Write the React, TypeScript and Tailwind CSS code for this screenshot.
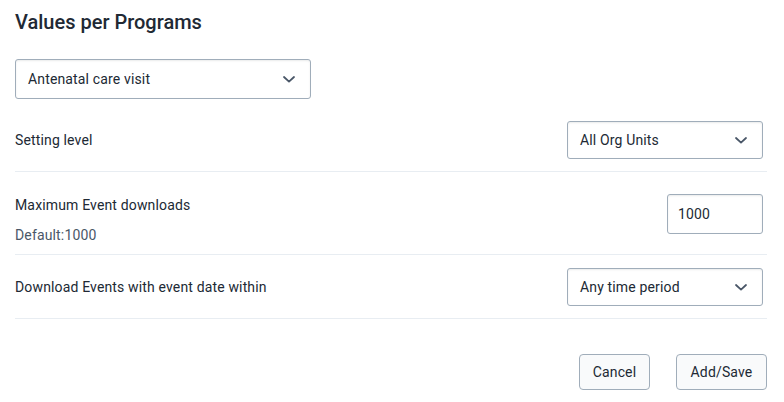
import React from 'react';

function Chevron() {
  return (
    <svg width="12" height="7" viewBox="0 0 12 7" fill="none" className="shrink-0">
      <path d="M1 1L6 5.6L11 1" stroke="#4a5768" strokeWidth="1.8" strokeLinecap="round" strokeLinejoin="round" />
    </svg>
  );
}

function Select({ value, className }: { value: string; className: string }) {
  return (
    <div
      className={`flex items-center justify-between pl-3 pr-[15px] bg-white border border-[#a0adba] rounded-[3px] shadow-[inset_0_1px_2px_0_rgba(48,54,60,0.1)] text-[14px] tracking-[0.15px] text-[#212934] ${className}`}
    >
      <span>{value}</span>
      <Chevron />
    </div>
  );
}

export default function App() {
  return (
    <div className="w-[784px] h-[402px] bg-white pl-[15px] pr-[17px] font-['Roboto','Liberation_Sans',sans-serif] text-[#212934]">
      <h2 className="pt-[10px] text-[20px] leading-[24px] font-medium text-[#212934]">Values per Programs</h2>

      <div className="mt-[25px]">
        <Select value="Antenatal care visit" className="w-[296px] h-[40px]" />
      </div>

      {/* Setting level */}
      <div className="flex items-center justify-between pt-[22px] pb-[12px] pr-1 border-b border-[#e8edf2]">
        <span className="text-[14px] leading-[20px] tracking-[0.15px]">Setting level</span>
        <Select value="All Org Units" className="w-[196px] h-[38px]" />
      </div>

      {/* Max downloads */}
      <div className="flex items-start justify-between pt-[22px] pb-[9px] pr-1 border-b border-[#e8edf2]">
        <div className="pt-px">
          <p className="text-[14px] leading-[20px] tracking-[0.15px]">Maximum Event downloads</p>
          <p className="mt-[10px] text-[14px] leading-[20px] tracking-[0.15px] text-[#4a5768]">Default:1000</p>
        </div>
        <div className="w-[96px] h-[40px] flex items-center pl-[10px] bg-white border border-[#a0adba] rounded-[3px] shadow-[inset_0_1px_2px_0_rgba(48,54,60,0.1)] text-[14px] tracking-[0.15px]">
          1000
        </div>
      </div>

      {/* Download period */}
      <div className="flex items-center justify-between pt-[13px] pb-[12px] pr-1 border-b border-[#e8edf2]">
        <span className="text-[14px] leading-[20px] tracking-[0.15px]">Download Events with event date within</span>
        <Select value="Any time period" className="w-[196px] h-[38px]" />
      </div>

      <div className="flex justify-end gap-[26px] mt-[35px]">
        <button className="w-[71px] h-[36px] bg-[#f9fafb] border border-[#a0adba] rounded-[4px] text-[14px] tracking-[0.15px] text-[#212934]">
          Cancel
        </button>
        <button className="w-[91px] h-[36px] bg-[#f9fafb] border border-[#a0adba] rounded-[4px] text-[14px] tracking-[0.15px] text-[#212934]">
          Add/Save
        </button>
      </div>
    </div>
  );
}
